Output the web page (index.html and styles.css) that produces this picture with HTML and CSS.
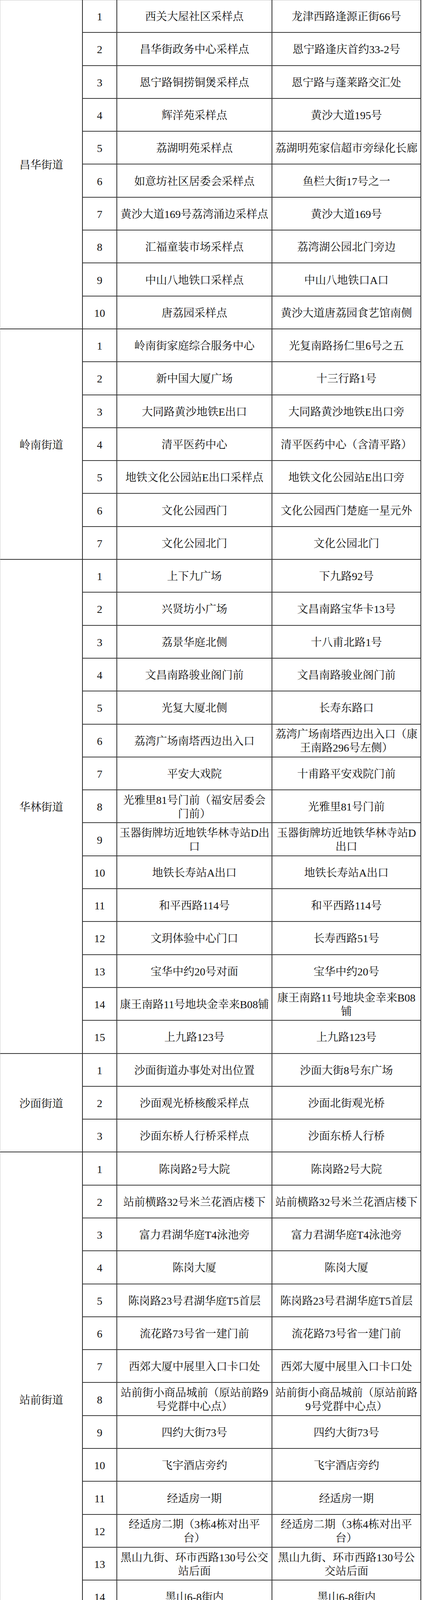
FILE: index.html
```html
<!DOCTYPE html>
<html lang="zh-CN">
<head>
<meta charset="utf-8">
<title>核酸采样点</title>
<link rel="stylesheet" href="styles.css">
</head>
<body>
<div class="sheet">

<div class="section">
  <div class="district">昌华街道</div>
  <div class="rows">
    <div class="row"><div class="cell num">1</div><div class="cell name">西关大屋社区采样点</div><div class="cell addr">龙津西路逢源正街66号</div></div>
    <div class="row"><div class="cell num">2</div><div class="cell name">昌华街政务中心采样点</div><div class="cell addr">恩宁路逢庆首约33-2号</div></div>
    <div class="row"><div class="cell num">3</div><div class="cell name">恩宁路铜捞铜煲采样点</div><div class="cell addr">恩宁路与蓬莱路交汇处</div></div>
    <div class="row"><div class="cell num">4</div><div class="cell name">辉洋苑采样点</div><div class="cell addr">黄沙大道195号</div></div>
    <div class="row"><div class="cell num">5</div><div class="cell name">荔湖明苑采样点</div><div class="cell addr">荔湖明苑家信超市旁绿化长廊</div></div>
    <div class="row"><div class="cell num">6</div><div class="cell name">如意坊社区居委会采样点</div><div class="cell addr">鱼栏大街17号之一</div></div>
    <div class="row"><div class="cell num">7</div><div class="cell name">黄沙大道169号荔湾涌边采样点</div><div class="cell addr">黄沙大道169号</div></div>
    <div class="row"><div class="cell num">8</div><div class="cell name">汇福童装市场采样点</div><div class="cell addr">荔湾湖公园北门旁边</div></div>
    <div class="row"><div class="cell num">9</div><div class="cell name">中山八地铁口采样点</div><div class="cell addr">中山八地铁口A口</div></div>
    <div class="row"><div class="cell num">10</div><div class="cell name">唐荔园采样点</div><div class="cell addr">黄沙大道唐荔园食艺馆南侧</div></div>
  </div>
</div>

<div class="section">
  <div class="district">岭南街道</div>
  <div class="rows">
    <div class="row"><div class="cell num">1</div><div class="cell name">岭南街家庭综合服务中心</div><div class="cell addr">光复南路扬仁里6号之五</div></div>
    <div class="row"><div class="cell num">2</div><div class="cell name">新中国大厦广场</div><div class="cell addr">十三行路1号</div></div>
    <div class="row"><div class="cell num">3</div><div class="cell name">大同路黄沙地铁E出口</div><div class="cell addr">大同路黄沙地铁E出口旁</div></div>
    <div class="row"><div class="cell num">4</div><div class="cell name">清平医药中心</div><div class="cell addr">清平医药中心（含清平路）</div></div>
    <div class="row"><div class="cell num">5</div><div class="cell name">地铁文化公园站E出口采样点</div><div class="cell addr">地铁文化公园站E出口旁</div></div>
    <div class="row"><div class="cell num">6</div><div class="cell name">文化公园西门</div><div class="cell addr">文化公园西门楚庭一星元外</div></div>
    <div class="row"><div class="cell num">7</div><div class="cell name">文化公园北门</div><div class="cell addr">文化公园北门</div></div>
  </div>
</div>

<div class="section">
  <div class="district">华林街道</div>
  <div class="rows">
    <div class="row"><div class="cell num">1</div><div class="cell name">上下九广场</div><div class="cell addr">下九路92号</div></div>
    <div class="row"><div class="cell num">2</div><div class="cell name">兴贤坊小广场</div><div class="cell addr">文昌南路宝华卡13号</div></div>
    <div class="row"><div class="cell num">3</div><div class="cell name">荔景华庭北侧</div><div class="cell addr">十八甫北路1号</div></div>
    <div class="row"><div class="cell num">4</div><div class="cell name">文昌南路骏业阁门前</div><div class="cell addr">文昌南路骏业阁门前</div></div>
    <div class="row"><div class="cell num">5</div><div class="cell name">光复大厦北侧</div><div class="cell addr">长寿东路口</div></div>
    <div class="row"><div class="cell num">6</div><div class="cell name">荔湾广场南塔西边出入口</div><div class="cell addr">荔湾广场南塔西边出入口（康<br>王南路296号左侧）</div></div>
    <div class="row"><div class="cell num">7</div><div class="cell name">平安大戏院</div><div class="cell addr">十甫路平安戏院门前</div></div>
    <div class="row"><div class="cell num">8</div><div class="cell name">光雅里81号门前（福安居委会<br>门前）</div><div class="cell addr">光雅里81号门前</div></div>
    <div class="row"><div class="cell num">9</div><div class="cell name">玉器街牌坊近地铁华林寺站D出<br>口</div><div class="cell addr">玉器街牌坊近地铁华林寺站D<br>出口</div></div>
    <div class="row"><div class="cell num">10</div><div class="cell name">地铁长寿站A出口</div><div class="cell addr">地铁长寿站A出口</div></div>
    <div class="row"><div class="cell num">11</div><div class="cell name">和平西路114号</div><div class="cell addr">和平西路114号</div></div>
    <div class="row"><div class="cell num">12</div><div class="cell name">文玥体验中心门口</div><div class="cell addr">长寿西路51号</div></div>
    <div class="row"><div class="cell num">13</div><div class="cell name">宝华中约20号对面</div><div class="cell addr">宝华中约20号</div></div>
    <div class="row"><div class="cell num">14</div><div class="cell name">康王南路11号地块金幸来B08铺</div><div class="cell addr">康王南路11号地块金幸来B08<br>铺</div></div>
    <div class="row"><div class="cell num">15</div><div class="cell name">上九路123号</div><div class="cell addr">上九路123号</div></div>
  </div>
</div>

<div class="section">
  <div class="district">沙面街道</div>
  <div class="rows">
    <div class="row"><div class="cell num">1</div><div class="cell name">沙面街道办事处对出位置</div><div class="cell addr">沙面大街8号东广场</div></div>
    <div class="row"><div class="cell num">2</div><div class="cell name">沙面观光桥核酸采样点</div><div class="cell addr">沙面北街观光桥</div></div>
    <div class="row"><div class="cell num">3</div><div class="cell name">沙面东桥人行桥采样点</div><div class="cell addr">沙面东桥人行桥</div></div>
  </div>
</div>

<div class="section">
  <div class="district">站前街道</div>
  <div class="rows">
    <div class="row"><div class="cell num">1</div><div class="cell name">陈岗路2号大院</div><div class="cell addr">陈岗路2号大院</div></div>
    <div class="row"><div class="cell num">2</div><div class="cell name">站前横路32号米兰花酒店楼下</div><div class="cell addr">站前横路32号米兰花酒店楼下</div></div>
    <div class="row"><div class="cell num">3</div><div class="cell name">富力君湖华庭T4泳池旁</div><div class="cell addr">富力君湖华庭T4泳池旁</div></div>
    <div class="row"><div class="cell num">4</div><div class="cell name">陈岗大厦</div><div class="cell addr">陈岗大厦</div></div>
    <div class="row"><div class="cell num">5</div><div class="cell name">陈岗路23号君湖华庭T5首层</div><div class="cell addr">陈岗路23号君湖华庭T5首层</div></div>
    <div class="row"><div class="cell num">6</div><div class="cell name">流花路73号省一建门前</div><div class="cell addr">流花路73号省一建门前</div></div>
    <div class="row"><div class="cell num">7</div><div class="cell name">西郊大厦中展里入口卡口处</div><div class="cell addr">西郊大厦中展里入口卡口处</div></div>
    <div class="row"><div class="cell num">8</div><div class="cell name">站前街小商品城前（原站前路9<br>号党群中心点）</div><div class="cell addr">站前街小商品城前（原站前路<br>9号党群中心点）</div></div>
    <div class="row"><div class="cell num">9</div><div class="cell name">四约大街73号</div><div class="cell addr">四约大街73号</div></div>
    <div class="row"><div class="cell num">10</div><div class="cell name">飞宇酒店旁约</div><div class="cell addr">飞宇酒店旁约</div></div>
    <div class="row"><div class="cell num">11</div><div class="cell name">经适房一期</div><div class="cell addr">经适房一期</div></div>
    <div class="row"><div class="cell num">12</div><div class="cell name">经适房二期（3栋4栋对出平<br>台）</div><div class="cell addr">经适房二期（3栋4栋对出平<br>台）</div></div>
    <div class="row"><div class="cell num">13</div><div class="cell name">黑山九街、环市西路130号公交<br>站后面</div><div class="cell addr">黑山九街、环市西路130号公<br>交站后面</div></div>
    <div class="row"><div class="cell num">14</div><div class="cell name">黑山6-8街内</div><div class="cell addr">黑山6-8街内</div></div>
    <div class="row"><div class="cell num">15</div><div class="cell name">步云天地广场（环市西路103<br>号）</div><div class="cell addr">步云天地广场（环市西路103<br>号）</div></div>
  </div>
</div>

<div class="section">
  <div class="district">彩虹街道</div>
  <div class="rows">
    <div class="row"><div class="cell num">1</div><div class="cell name">党恩雅苑外广场</div><div class="cell addr">中山八路与周门街交界处</div></div>
    <div class="row"><div class="cell num">2</div><div class="cell name">何济公大厦</div><div class="cell addr">荔湾路49号之二</div></div>
    <div class="row"><div class="cell num">3</div><div class="cell name">幸福新村</div><div class="cell addr">荔湾路58号</div></div>
    <div class="row"><div class="cell num">4</div><div class="cell name">园中园广场</div><div class="cell addr">周门街80号首层园中园社区居<br>委会后门处</div></div>
    <div class="row"><div class="cell num">5</div><div class="cell name">周门采样点</div><div class="cell addr">周门西街5号、6号楼下</div></div>
    <div class="row"><div class="cell num">6</div><div class="cell name">石桂里广场</div><div class="cell addr">周门路25号永通驾校旁边</div></div>
    <div class="row"><div class="cell num">7</div><div class="cell name">荔京阁</div><div class="cell addr">荔湾路121号</div></div>
    <div class="row"><div class="cell num">8</div><div class="cell name">荔怡中心</div><div class="cell addr">周门路16号</div></div>
    <div class="row"><div class="cell num">9</div><div class="cell name">小桥村</div><div class="cell addr">小桥村</div></div>
    <div class="row"><div class="cell num">10</div><div class="cell name">冼家庄社区居委会门口</div><div class="cell addr">冼家庄17号</div></div>
    <div class="row"><div class="cell num">11</div><div class="cell name">彩虹文化广场地铁口</div><div class="cell addr">彩虹桥地铁站D出口</div></div>
    <div class="row"><div class="cell num">12</div><div class="cell name">环彩居委会</div><div class="cell addr">西华路69号</div></div>
    <div class="row"><div class="cell num">13</div><div class="cell name">环彩地铁口</div><div class="cell addr">彩虹桥地铁站C出口</div></div>
  </div>
</div>

<div class="section">
  <div class="district">桥中街道</div>
  <div class="rows">
    <div class="row"><div class="cell num">1</div><div class="cell name">河沙、恒海社区</div><div class="cell addr">河沙联社办公楼大院(福源路8<br>号)</div></div>
    <div class="row"><div class="cell num">2</div><div class="cell name">颐和、长安社区</div><div class="cell addr">珠岛花园中央花园（珠岛花园<br>中央花园）</div></div>
    <div class="row"><div class="cell num">3</div><div class="cell name">江悦社区</div><div class="cell addr">花语水岸小区对出广场(印月<br>街3号)</div></div>
    <div class="row"><div class="cell num">4</div><div class="cell name">江悦社区</div><div class="cell addr">悦江上品南门（悦品一街5<br>号）</div></div>
    <div class="row"><div class="cell num">5</div><div class="cell name">颐和社区</div><div class="cell addr">双桥8号(裕福街35-73号)</div></div>
  </div>
</div>

</div>
</body>
</html>
```

FILE: styles.css
```css
* {
  box-sizing: border-box;
}

body {
  margin: 0;
  background: #ffffff;
}

.sheet {
  width: 1078px;
  box-shadow: inset 0 1px 0 #c8c8c8;
  font-family: "Liberation Serif", "Noto Serif CJK SC", "Noto Sans CJK SC", serif;
  font-size: 28px;
  color: #111111;
}

.section {
  display: flex;
}

.district {
  width: 212px;
  flex: none;
  display: flex;
  align-items: center;
  justify-content: center;
  border-left: 1px solid #cfcfcf;
  border-right: 2px solid #2a2a2a;
  border-bottom: 2px solid #333333;
}

.rows {
  flex: 1;
  min-width: 0;
  display: flex;
  flex-direction: column;
}

.row {
  display: grid;
  grid-template-columns: 88px 397px minmax(0, 1fr);
  height: 84.3px;
  border-bottom: 2px solid #383838;
  border-right: 2px solid #2a2a2a;
}

.cell {
  display: flex;
  align-items: center;
  justify-content: center;
  text-align: center;
  line-height: 35px;
  padding: 3px 4px 0;
  white-space: nowrap;
}

.num,
.name {
  border-right: 2px solid #2a2a2a;
}
```
